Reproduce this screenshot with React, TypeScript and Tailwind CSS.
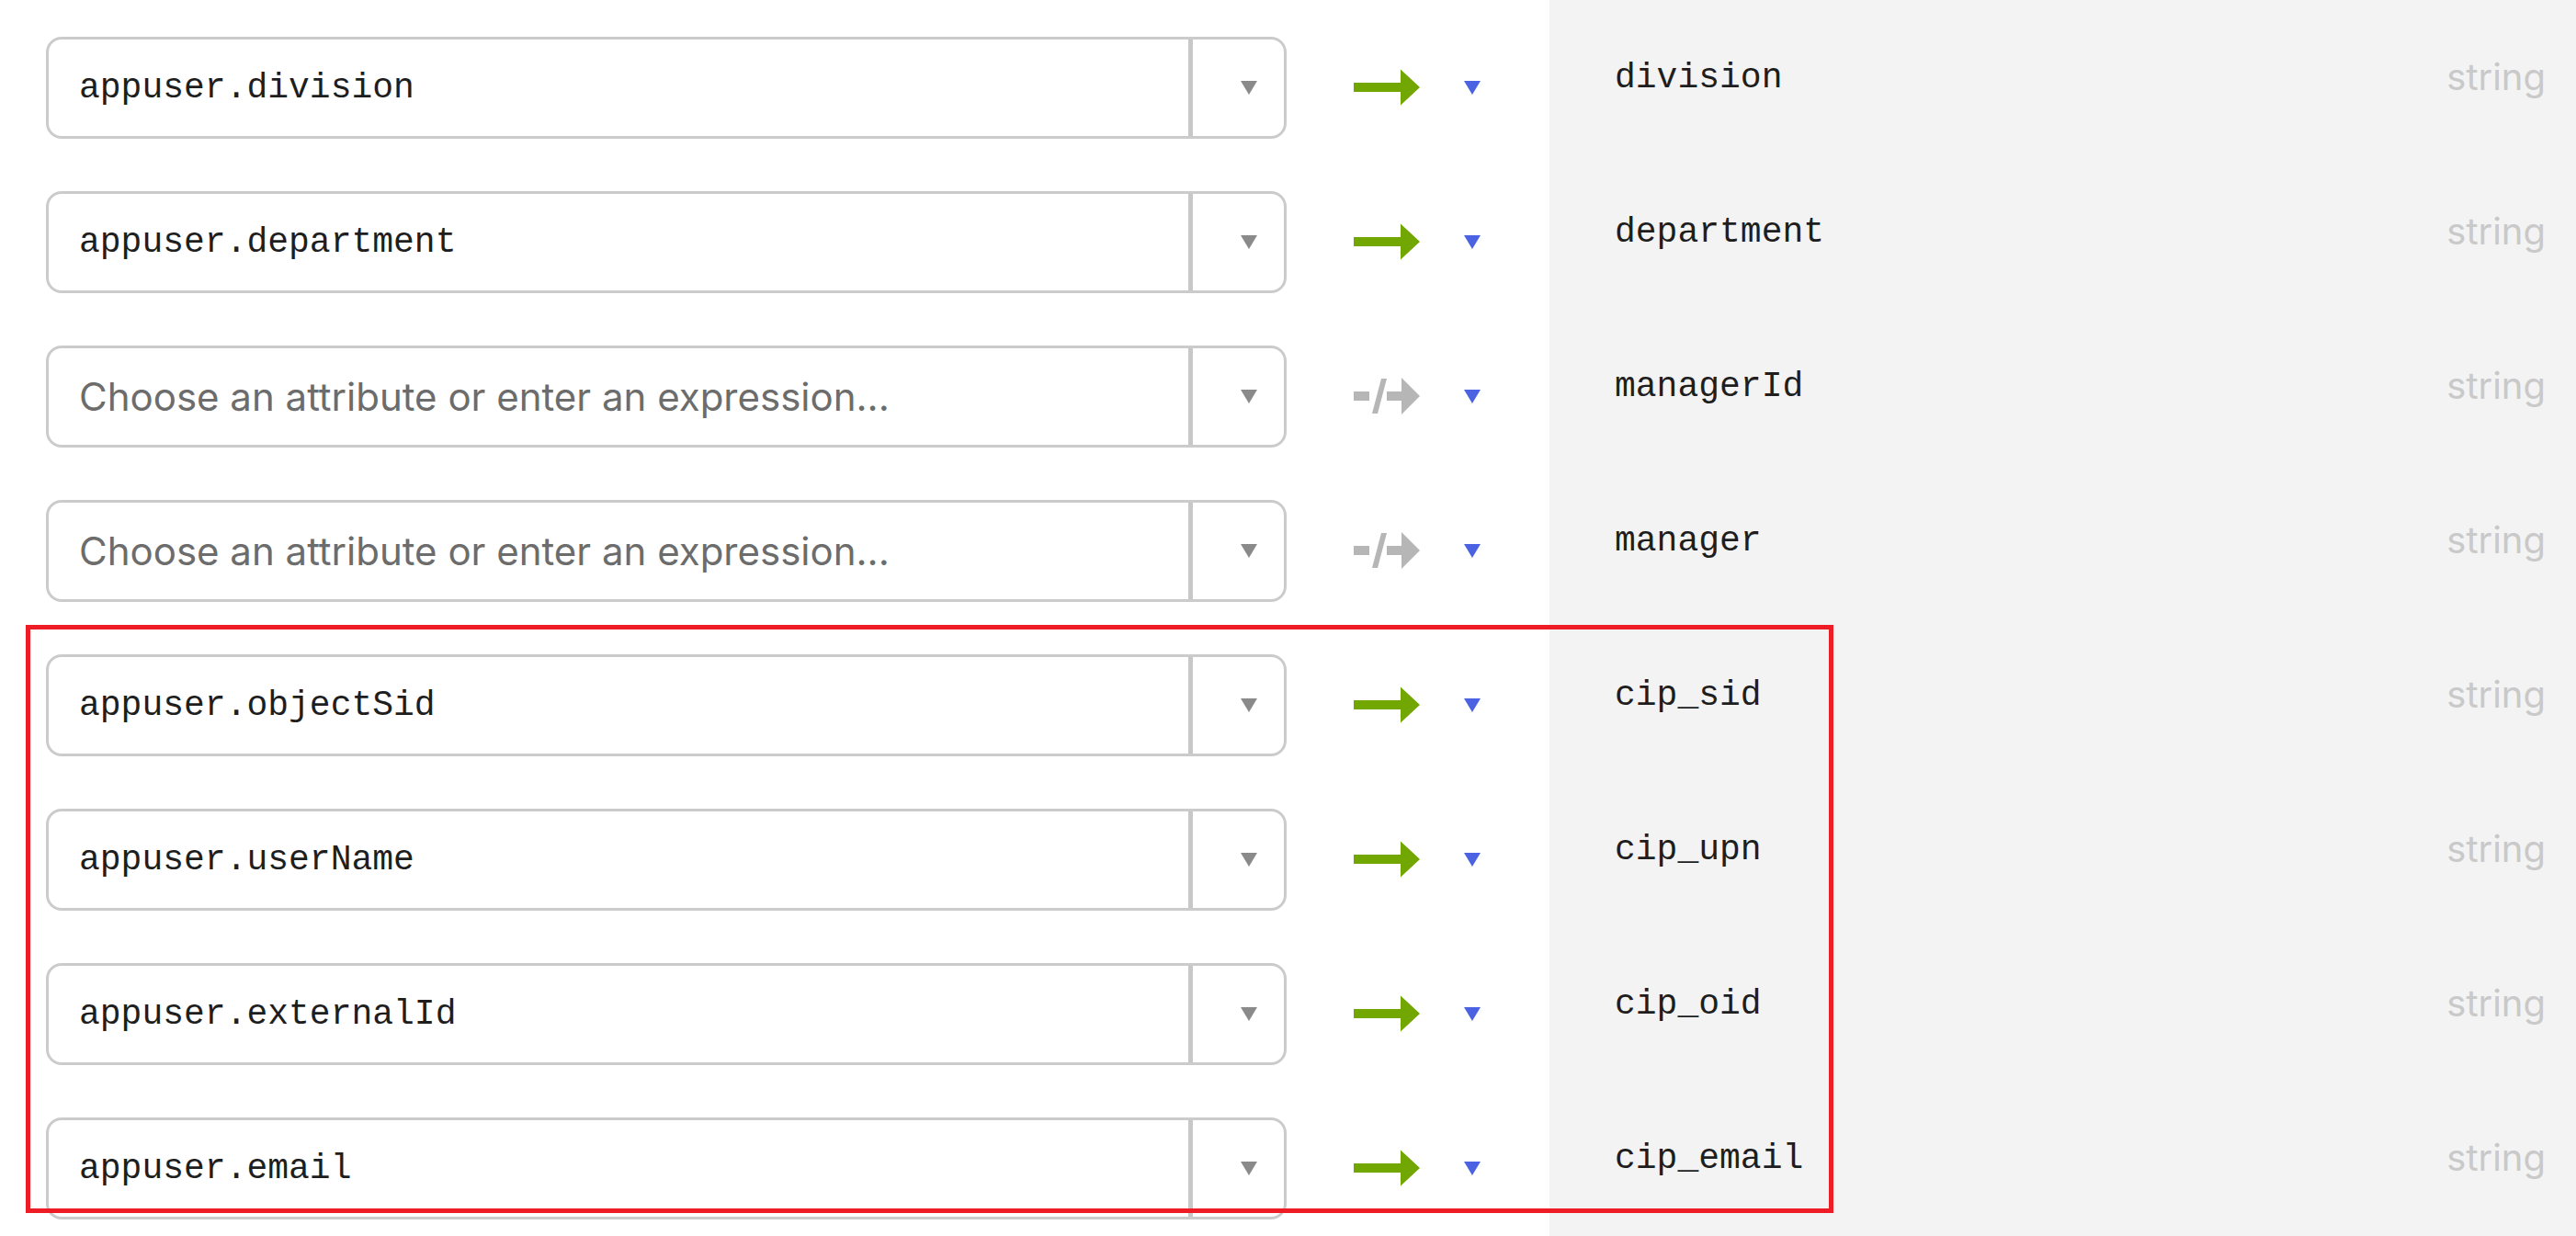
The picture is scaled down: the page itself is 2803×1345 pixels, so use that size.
import React from "react";

type Mapping = {
  source?: string;
  target: string;
  type: string;
};

const mappings: Mapping[] = [
  { source: "appuser.division", target: "division", type: "string" },
  { source: "appuser.department", target: "department", type: "string" },
  { target: "managerId", type: "string" },
  { target: "manager", type: "string" },
  { source: "appuser.objectSid", target: "cip_sid", type: "string" },
  { source: "appuser.userName", target: "cip_upn", type: "string" },
  { source: "appuser.externalId", target: "cip_oid", type: "string" },
  { source: "appuser.email", target: "cip_email", type: "string" },
];

const mono = "font-['Liberation_Mono','Courier_New',monospace]";

const Caret = ({ color }: { color: string }) => (
  <svg width="18" height="15" viewBox="0 0 18 15">
    <polygon points="0,0 18,0 9,15" fill={color} />
  </svg>
);

// green arrow = attribute is mapped, grey crossed arrow = nothing mapped
const MapArrow = ({ mapped }: { mapped: boolean }) =>
  mapped ? (
    <svg width="72" height="40" viewBox="0 0 72 40">
      <path d="M0 15 H51 V0.5 L72 20 L51 39.5 V25 H0 Z" fill="#72a600" />
    </svg>
  ) : (
    <svg width="72" height="40" viewBox="0 0 72 40">
      <rect x="0" y="15" width="17" height="10" fill="#b6b6b6" />
      <polygon points="20,39 26,39 36,1 30,1" fill="#b6b6b6" />
      <rect x="36" y="15" width="17" height="10" fill="#b6b6b6" />
      <polygon points="52,0 72,20 52,40" fill="#b6b6b6" />
    </svg>
  );

const AttributeSelect = ({ value }: { value?: string }) => (
  <div className="flex h-[111px] w-[1350px] rounded-[17px] border-[3px] border-[#cbcbcb] bg-white">
    <div className="flex flex-1 items-center pl-[33px]">
      {value ? (
        <span className={`${mono} text-[38px] text-[#1e1e1e]`}>{value}</span>
      ) : (
        <span className="font-['Inter',sans-serif] text-[42px] text-[#6c6c6c]">
          Choose an attribute or enter an expression...
        </span>
      )}
    </div>
    <div className="flex w-[104px] items-center justify-end border-l-[5px] border-[#c8c8c8] pr-[29px]">
      <Caret color="#8a8a8a" />
    </div>
  </div>
);

const MappingRow = ({ mapping }: { mapping: Mapping }) => (
  <div className="flex h-[168px]">
    <div className="flex w-[1686px] items-center bg-white pl-[50px]">
      <AttributeSelect value={mapping.source} />
      <div className="ml-[73px] flex items-center">
        <MapArrow mapped={!!mapping.source} />
      </div>
      <div className="ml-[48px] flex items-center">
        <Caret color="#4b63e2" />
      </div>
    </div>
    <div className="flex flex-1 items-center justify-between bg-[#f3f3f3] pb-[22px] pl-[71px] pr-[33px]">
      <span className={`${mono} text-[38px] text-[#1e1e1e]`}>
        {mapping.target}
      </span>
      <span className="font-['Inter',sans-serif] text-[40px] text-[#c9c9c9]">
        {mapping.type}
      </span>
    </div>
  </div>
);

export default function App() {
  return (
    <div className="relative h-[1345px] w-[2803px] overflow-hidden bg-white">
      <div className="flex h-[11px]">
        <div className="w-[1686px] bg-white" />
        <div className="flex-1 bg-[#f3f3f3]" />
      </div>
      {mappings.map((m) => (
        <MappingRow key={m.target} mapping={m} />
      ))}
      {/* highlight around the cip_* mappings */}
      <div className="pointer-events-none absolute left-[28px] top-[680px] h-[640px] w-[1967px] border-[5px] border-[#ee1d25]" />
    </div>
  );
}
